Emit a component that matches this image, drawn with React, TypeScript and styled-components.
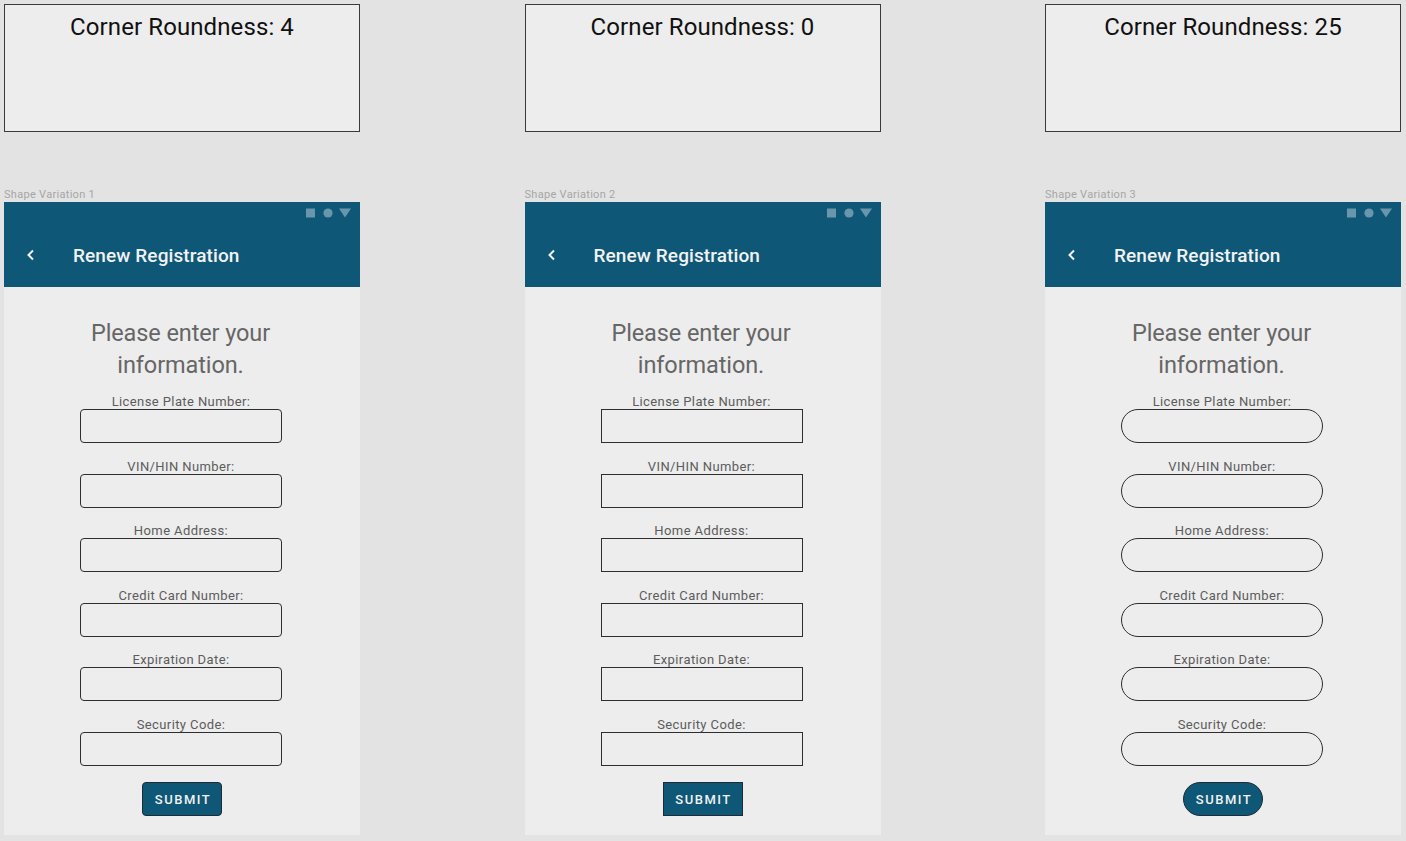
import React from "react";
import styled, { createGlobalStyle } from "styled-components";

const GlobalStyle = createGlobalStyle`
  html, body {
    margin: 0;
    padding: 0;
    background: #e3e3e3;
    font-family: Roboto, "Liberation Sans", sans-serif;
  }
`;

interface IVariation {
  radius: number;
  pill?: boolean;
}

const variations: IVariation[] = [
  { radius: 4 },
  { radius: 0 },
  { radius: 25, pill: true },
];

const fields = [
  "License Plate Number:",
  "VIN/HIN Number:",
  "Home Address:",
  "Credit Card Number:",
  "Expiration Date:",
  "Security Code:",
];

const Chevron = () => (
  <svg width="10" height="12" viewBox="0 0 10 12">
    <polyline points="7,1.5 2.5,6 7,10.5" fill="none" stroke="#f2f2f2" strokeWidth="2" />
  </svg>
);

const StatusIcons = () => (
  <svg width="46" height="10" viewBox="0 0 46 10">
    <rect x="0" y="0.5" width="9" height="9" fill="#6a96ab" />
    <circle cx="22" cy="5" r="4.6" fill="#6a96ab" />
    <polygon points="33,0.5 45,0.5 39,9.5" fill="#6a96ab" />
  </svg>
);

const Column: React.FC<{ v: IVariation; index: number }> = ({ v, index }) => {
  const r = v.pill ? 17 : v.radius;
  return (
    <ColumnStyles>
      <InfoBox>Corner Roundness: {v.radius}</InfoBox>
      <Caption>Shape Variation {index + 1}</Caption>
      <Phone>
        <Header>
          <StatusRow>
            <StatusIcons />
          </StatusRow>
          <TitleRow>
            <BackButton>
              <Chevron />
            </BackButton>
            <Title>Renew Registration</Title>
          </TitleRow>
        </Header>
        <Body>
          <Heading>
            Please enter your
            <br />
            information.
          </Heading>
          <Form>
            {fields.map((f) => (
              <Field key={f}>
                <Label>{f}</Label>
                <Input $radius={r} />
              </Field>
            ))}
          </Form>
          <Submit $radius={r}>SUBMIT</Submit>
        </Body>
      </Phone>
    </ColumnStyles>
  );
};

const App: React.FC = () => (
  <Page>
    <GlobalStyle />
    {variations.map((v, i) => (
      <Column key={i} v={v} index={i} />
    ))}
  </Page>
);

export default App;

const Page = styled.div`
  display: flex;
  justify-content: space-between;
  padding: 4px 5px 0 4px;
  width: 1406px;
  height: 841px;
  box-sizing: border-box;
  overflow: hidden;
`;

const ColumnStyles = styled.div`
  width: 356px;
  display: flex;
  flex-direction: column;
`;

const InfoBox = styled.div`
  height: 128px;
  box-sizing: border-box;
  border: 1px solid #3a3a3a;
  background: #ededed;
  color: #111;
  font-size: 24px;
  letter-spacing: 0.1px;
  text-align: center;
  padding-top: 8px;
`;

const Caption = styled.div`
  margin-top: 55px;
  height: 15px;
  font-size: 11px;
  letter-spacing: 0.3px;
  line-height: 15px;
  color: #a6a6a6;
  white-space: nowrap;
`;

const Phone = styled.div`
  display: flex;
  flex-direction: column;
  background: #ededed;
`;

const Header = styled.div`
  background: #0f5777;
  height: 85px;
  display: flex;
  flex-direction: column;
`;

const StatusRow = styled.div`
  display: flex;
  justify-content: flex-end;
  padding: 6px 8px 0 0;
  height: 20px;
  box-sizing: border-box;
`;

const TitleRow = styled.div`
  display: flex;
  align-items: center;
  height: 68px;
  margin-top: 2px;
`;

const BackButton = styled.div`
  width: 69px;
  display: flex;
  justify-content: flex-start;
  padding-left: 22px;
  box-sizing: border-box;
`;

const Title = styled.div`
  color: #f2f2f2;
  font-size: 19px;
  font-weight: 500;
  letter-spacing: 0.1px;
`;

const Body = styled.div`
  height: 548px;
  display: flex;
  flex-direction: column;
  align-items: center;
  padding-top: 30px;
  box-sizing: border-box;
`;

const Heading = styled.div`
  font-size: 23.5px;
  line-height: 32px;
  color: #666;
  text-align: center;
  letter-spacing: -0.1px;
  margin-right: 3px;
`;

const Form = styled.div`
  display: flex;
  flex-direction: column;
  gap: 14.6px;
  margin-top: 12px;
  margin-right: 2px;
`;

const Field = styled.div`
  display: flex;
  flex-direction: column;
  align-items: center;
`;

const Label = styled.label`
  font-size: 13px;
  line-height: 16px;
  color: #5c5c5c;
  letter-spacing: 0.4px;
  padding-top: 1px;
  margin-bottom: -1px;
`;

const Input = styled.div<{ $radius: number }>`
  width: 202px;
  height: 34px;
  box-sizing: border-box;
  border: 1px solid #2e2e2e;
  border-radius: ${(p) => p.$radius}px;
`;

const Submit = styled.button<{ $radius: number }>`
  margin-top: 16px;
  width: 80px;
  height: 34px;
  background: #0f5777;
  border: 1px solid #1e2b33;
  border-radius: ${(p) => p.$radius}px;
  color: #f2f2f2;
  font-family: Roboto, "Liberation Sans", sans-serif;
  font-size: 13px;
  font-weight: 500;
  letter-spacing: 1.5px;
  padding: 2px 0 0 2px;
`;
